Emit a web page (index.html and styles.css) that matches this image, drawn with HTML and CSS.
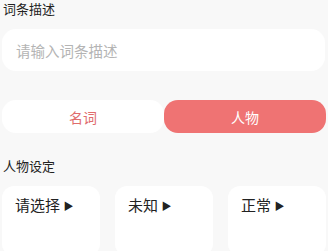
FILE: index.html
```html
<!DOCTYPE html>
<html lang="zh">
<head>
  <meta charset="UTF-8" />
  <meta name="viewport" content="width=device-width, initial-scale=1.0" />
  <title>词条编辑</title>
  <link rel="stylesheet" href="styles.css">
</head>
<body>
  <div class="page">
    <div class="label">词条描述</div>
    <input type="text" class="desc" placeholder="请输入词条描述" />

    <div class="toggle">
      <button class="tab">名词</button>
      <button class="tab active">人物</button>
    </div>

    <div class="label role-label">人物设定</div>
    <div class="cards">
      <div class="card">请选择 <span class="arrow">▶</span></div>
      <div class="card">未知 <span class="arrow">▶</span></div>
      <div class="card">正常 <span class="arrow">▶</span></div>
    </div>
  </div>
</body>
</html>
```

FILE: styles.css
```css
* {
  margin: 0;
  padding: 0;
  box-sizing: border-box;
  font-family: "Noto Sans CJK SC", "Noto Sans", sans-serif;
}
body {
  background: #f8f8f8;
  height: 251px;
  overflow: hidden;
}
.page {
  padding: 1px 2px 0;
}
.label {
  font-size: 13px;
  line-height: 15px;
  color: #222;
  padding: 0 1px;
}
.desc {
  display: block;
  width: 323px;
  height: 42px;
  margin-top: 13px;
  border: none;
  outline: none;
  border-radius: 14px;
  background: #fff;
  padding: 0 14px;
  font-size: 14.5px;
  color: #333;
}
.desc::placeholder {
  color: #b4b4b4;
}
.toggle {
  display: flex;
  margin-top: 29px;
}
.tab {
  flex: 1;
  height: 33px;
  border: none;
  border-radius: 14px;
  background: #fff;
  font-size: 14px;
  color: #e06c6c;
}
.tab.active {
  background: #ef7373;
  color: #fff;
}
.role-label {
  margin-top: 25px;
}
.cards {
  display: grid;
  grid-template-columns: repeat(3, 1fr);
  gap: 15px;
  margin-top: 13px;
}
.card {
  height: 70px;
  background: #fff;
  border-radius: 12px;
  padding: 9px 13px;
  font-size: 15px;
  line-height: 20px;
  color: #222;
}
.arrow {
  font-size: 10px;
  vertical-align: 1px;
}
```
